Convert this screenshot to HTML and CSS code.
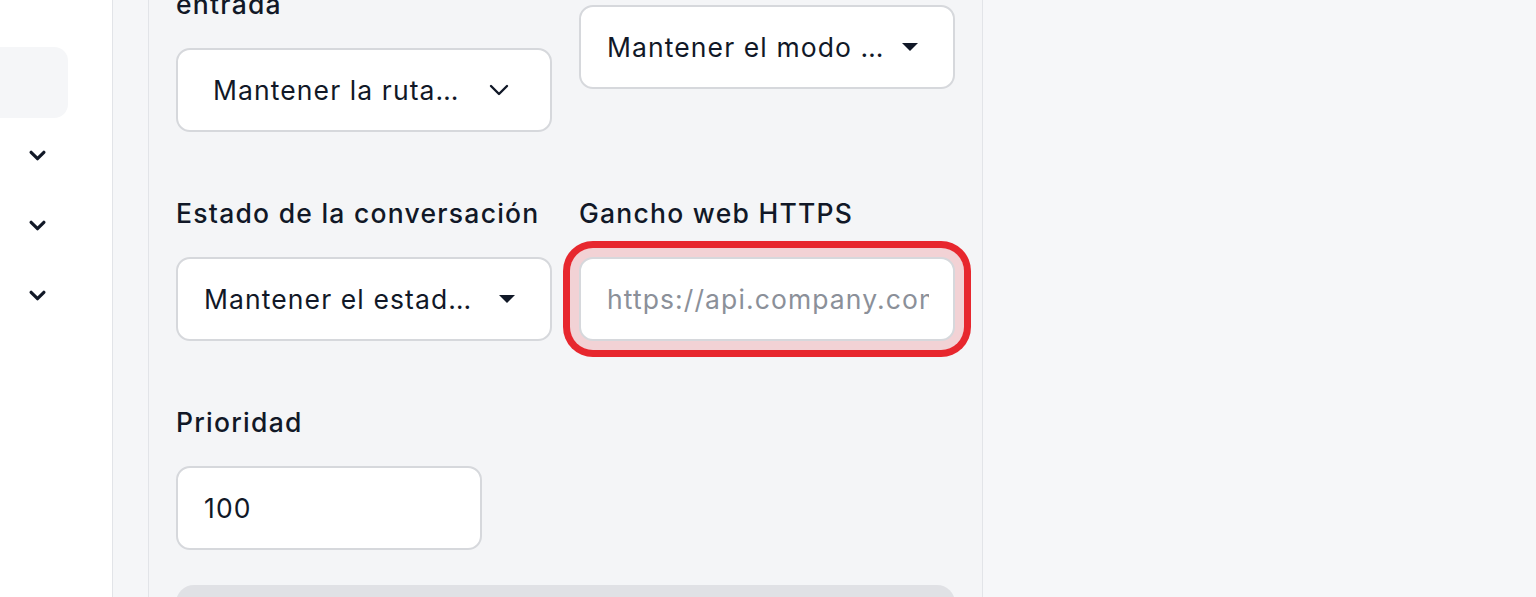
FILE: index.html
```html
<!DOCTYPE html>
<html lang="es">
<head>
<meta charset="utf-8">
<title>Reglas</title>
<link rel="stylesheet" href="styles.css">
</head>
<body>
<div class="app">
  <aside class="sidebar">
    <div class="side-item active"></div>
    <div class="side-row"><svg class="side-chev" viewBox="0 0 16 10" width="17" height="11"><path d="M2 2 L8 8 L14 2" fill="none" stroke="#111827" stroke-width="3" stroke-linecap="round" stroke-linejoin="round"/></svg></div>
    <div class="side-row"><svg class="side-chev" viewBox="0 0 16 10" width="17" height="11"><path d="M2 2 L8 8 L14 2" fill="none" stroke="#111827" stroke-width="3" stroke-linecap="round" stroke-linejoin="round"/></svg></div>
    <div class="side-row"><svg class="side-chev" viewBox="0 0 16 10" width="17" height="11"><path d="M2 2 L8 8 L14 2" fill="none" stroke="#111827" stroke-width="3" stroke-linecap="round" stroke-linejoin="round"/></svg></div>
  </aside>
  <main class="main">
    <section class="panel">
      <div class="form">
        <div class="grid">
          <div class="field">
            <label class="label">Ruta de la bandeja de entrada</label>
            <div class="select select-native">
              <span class="select-text">Mantener la ruta…</span>
              <svg class="chev" viewBox="0 0 20 12" width="20" height="12"><path d="M2 2 L10 10 L18 2" fill="none" stroke="#111827" stroke-width="2.4" stroke-linecap="round" stroke-linejoin="round"/></svg>
            </div>
          </div>
          <div class="field">
            <label class="label">Modo de respuesta</label>
            <div class="select">
              <span class="select-text">Mantener el modo …</span>
              <svg class="caret" viewBox="0 0 16 8" width="16" height="8"><path d="M0 0 H16 L8 8 Z" fill="#111827"/></svg>
            </div>
          </div>
        </div>
        <div class="grid row">
          <div class="field">
            <label class="label">Estado de la conversación</label>
            <div class="select">
              <span class="select-text">Mantener el estad…</span>
              <svg class="caret" viewBox="0 0 16 8" width="16" height="8"><path d="M0 0 H16 L8 8 Z" fill="#111827"/></svg>
            </div>
          </div>
          <div class="field">
            <label class="label">Gancho web HTTPS</label>
            <input class="input input-focus" type="text" placeholder="https://api.company.com/webhooks">
          </div>
        </div>
        <div class="row">
          <div class="field">
            <label class="label">Prioridad</label>
            <input class="input input-small" type="text" value="100">
          </div>
        </div>
        <div class="bar"></div>
      </div>
    </section>
    <div class="rest"></div>
  </main>
</div>
</body>
</html>
```
FILE: styles.css
```css
* { box-sizing: border-box; }
html, body { margin: 0; padding: 0; }
body {
  font-family: Inter, "Noto Sans", "Liberation Sans", sans-serif;
  color: #111827;
  background: #f5f6f8;
  overflow: hidden;
}
.app {
  display: flex;
  height: 597px;
  overflow: hidden;
}
.sidebar {
  width: 113px;
  flex: none;
  background: #ffffff;
  border-right: 1px solid #e2e4e8;
  padding-top: 47px;
  display: flex;
  flex-direction: column;
}
.side-item {
  width: 68px;
  height: 71px;
  border-radius: 0 14px 14px 0;
  background: #f5f6f8;
  margin-bottom: 2px;
}
.side-row {
  height: 70px;
  display: flex;
  align-items: center;
  padding-left: 29px;
}
.side-chev { display: block; }
.main {
  flex: 1;
  display: flex;
  background: #f5f6f8;
  padding-left: 35px;
}
.panel {
  width: 835px;
  flex: none;
  border-left: 1px solid #e2e4e8;
  border-right: 1px solid #e2e4e8;
  padding: 0 27px;
  background: #f4f5f7;
}
.rest { flex: 1; background: #f6f7f9; }
.form {
  margin-top: -60px;
  display: flex;
  flex-direction: column;
}
.grid {
  display: grid;
  grid-template-columns: 376px 376px;
  column-gap: 27px;
  align-items: start;
}
.row { margin-top: 60px; }
.field {
  display: flex;
  flex-direction: column;
}
.label {
  font-size: 26.5px;
  line-height: 43px;
  font-weight: 500;
  letter-spacing: 1.25px;
  color: #111827;
  margin-bottom: 22px;
}
.select {
  height: 84px;
  background: #ffffff;
  border: 2px solid #d6d8dc;
  border-radius: 14px;
  display: flex;
  align-items: center;
  justify-content: space-between;
  padding: 0 35px 0 26px;
}
.select-native { padding: 0 41px 0 35px; }
.select-text {
  font-size: 26.5px;
  letter-spacing: 1.1px;
  color: #111827;
  white-space: nowrap;
}
.chev, .caret { display: block; flex: none; }
.input {
  height: 84px;
  width: 100%;
  background: #ffffff;
  border: 2px solid #d6d8dc;
  border-radius: 14px;
  padding: 0 24px 0 26px;
  font-family: inherit;
  font-size: 26.5px;
  letter-spacing: 1.1px;
  color: #111827;
  outline: none;
}
.input::placeholder { color: #8b9099; }
.input-focus {
  box-shadow: 0 0 0 9px #f2d2d5, 0 0 0 16px #e7272e;
}
.input-small { width: 306px; }
.bar {
  margin-top: 35px;
  height: 60px;
  border-radius: 18px;
  background: #e0e1e5;
}
```
